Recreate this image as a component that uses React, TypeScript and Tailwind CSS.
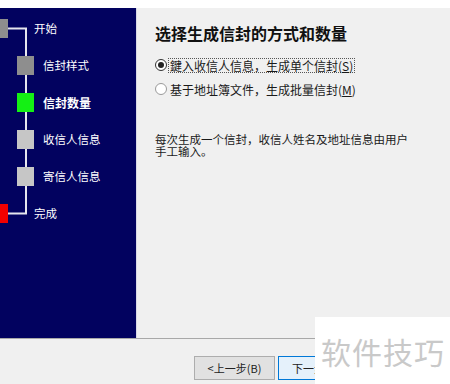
import React from 'react';

const font = {
  fontFamily: '"Noto Sans CJK SC", "Microsoft YaHei", "Liberation Sans", sans-serif',
};

type Step = {
  label: string;
  color: string;
  edge?: boolean;
  bold?: boolean;
};

const steps: Step[] = [
  { label: '开始', color: 'bg-[#8e8e8e]', edge: true },
  { label: '信封样式', color: 'bg-[#8e8e8e]' },
  { label: '信封数量', color: 'bg-[#14f014]', bold: true },
  { label: '收信人信息', color: 'bg-[#c6c6c6]' },
  { label: '寄信人信息', color: 'bg-[#c6c6c6]' },
  { label: '完成', color: 'bg-[#f20000]', edge: true },
];

function StepList() {
  return (
    <div className="relative w-[137px] h-[330px] bg-[#02025f] border-r border-[#d8d8e6] overflow-hidden">
      {/* connector lines */}
      <svg className="absolute inset-0" width="137" height="330">
        <path
          d="M0 20.5 H26 V205.5 H0"
          fill="none"
          stroke="#e6e6ee"
          strokeWidth="2"
        />
      </svg>
      <div className="relative flex flex-col pt-[2px]">
        {steps.map((s) => (
          <div key={s.label} className="flex items-center h-[37px]">
            <div
              className={
                s.edge
                  ? `ml-[-9px] w-[17px] h-[19px] shrink-0 ${s.color}`
                  : `ml-[17px] w-[17px] h-[19px] shrink-0 ${s.color}`
              }
            />
            <span
              className={`${s.edge ? 'ml-[26px]' : 'ml-[9px]'} text-[11.5px] leading-none text-white whitespace-nowrap ${
                s.bold ? 'font-bold text-[12px]' : ''
              }`}
            >
              {s.label}
            </span>
          </div>
        ))}
      </div>
    </div>
  );
}

function Radio({ checked }: { checked?: boolean }) {
  return (
    <span
      className={`flex items-center justify-center w-[12px] h-[12px] rounded-full border shrink-0 bg-white ${
        checked ? 'border-[#333333]' : 'border-[#9a9a9a]'
      }`}
    >
      {checked && <span className="w-[6px] h-[6px] rounded-full bg-[#222222]" />}
    </span>
  );
}

export default function App() {
  return (
    <div
      className="relative w-[450px] h-[384px] bg-white overflow-hidden text-[#1a1a1a]"
      style={font}
    >
      <div className="h-[8px] bg-white" />
      <div className="flex">
        <StepList />
        <div className="flex-1 h-[330px] bg-[#f0f0f0] pl-[18px] pt-[15px]">
          <h2 className="text-[16px] leading-[20px] font-bold text-[#111]">
            选择生成信封的方式和数量
          </h2>
          <div className="mt-[13px] flex items-center h-[18px]">
            <Radio checked />
            <span className="ml-[1px] px-[1px] border border-dotted border-[#555] text-[12px] leading-[13px] whitespace-nowrap">
              鍵入收信人信息，生成单个信封(<span className="underline">S</span>)
            </span>
          </div>
          <div className="mt-[6px] flex items-center h-[18px]">
            <Radio />
            <span className="ml-[2px] px-[1px] text-[12px] leading-[13px] whitespace-nowrap">
              基于地址簿文件，生成批量信封(<span className="underline">M</span>)
            </span>
          </div>
          <p className="mt-[35px] text-[11.5px] leading-[12px] w-[260px]">
            每次生成一个信封，收信人姓名及地址信息由用户
            <br />
            手工输入。
          </p>
        </div>
      </div>
      <div className="border-t border-[#a8a8a8] h-[46px] bg-[#f0f0f0] pt-[17px]">
        <div className="w-[315px] overflow-hidden flex pl-[194px] gap-[3px]">
          <button className="w-[81px] h-[24px] shrink-0 border border-[#adadad] bg-[#e1e1e1] text-[11px] text-[#222]">
            &lt;上一步(B)
          </button>
          <button className="w-[81px] h-[24px] shrink-0 border border-[#0078d7] bg-[#e5f1fb] text-[11px] text-[#222] text-left pl-[13px] overflow-hidden whitespace-nowrap">
            下一步(N)&gt;
          </button>
        </div>
      </div>
      {/* watermark overlay */}
      <div className="absolute left-[315px] top-[317px] right-0 bottom-0 bg-white flex items-center pl-[6px]">
        <span className="text-[30px] leading-none text-[#c9c9c9] tracking-[1px] whitespace-nowrap">
          软件技巧
        </span>
      </div>
    </div>
  );
}
